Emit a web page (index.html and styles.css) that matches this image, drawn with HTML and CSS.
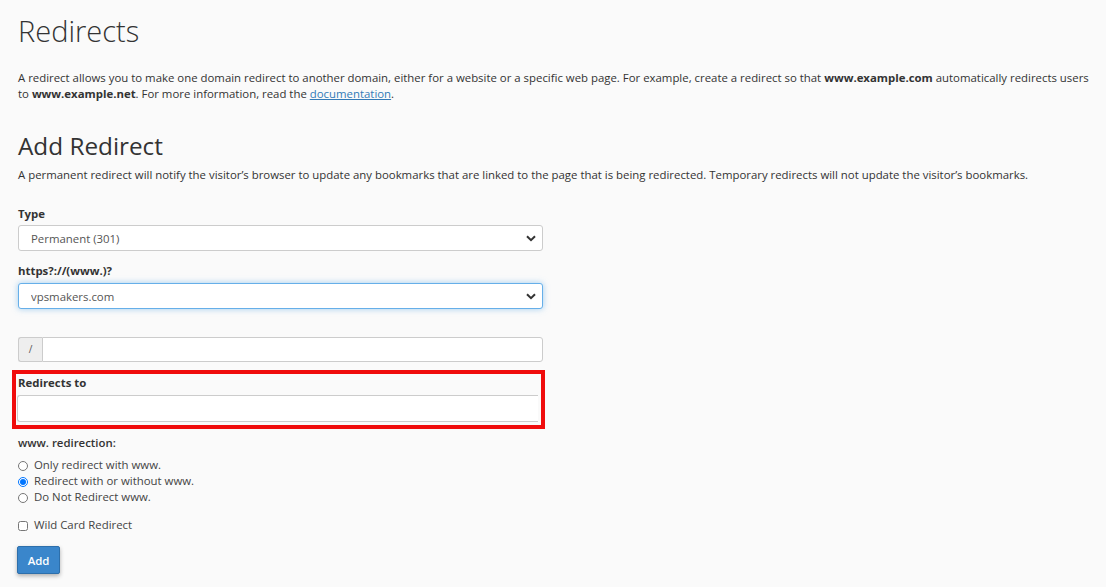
FILE: index.html
```html
<!DOCTYPE html>
<html lang="en">
<head>
    <meta charset="UTF-8">
    <meta name="viewport" content="width=device-width, initial-scale=1.0">
    <title>Redirects</title>
    <link rel="stylesheet" href="styles.css">
</head>
<body>

    <div class="container">
        <h1>Redirects</h1>
        <p class="intro">A redirect allows you to make one domain redirect to another domain, either for a website or a specific web page. For example, create a redirect so that <strong>www.example.com</strong> automatically redirects users to <strong>www.example.net</strong>. For more information, read the <a href="#">documentation</a>.</p>

        <h2>Add Redirect</h2>
        <p class="sub">A permanent redirect will notify the visitor’s browser to update any bookmarks that are linked to the page that is being redirected. Temporary redirects will not update the visitor’s bookmarks.</p>

        <div class="form-group first">
            <label for="type">Type</label>
            <div class="select-wrap">
                <select id="type">
                    <option>Permanent (301)</option>
                    <option>Temporary (302)</option>
                </select>
                <svg class="chevron" width="10" height="7" viewBox="0 0 10 7"><path d="M1 1.2 L5 5.2 L9 1.2" fill="none" stroke="#333" stroke-width="2"/></svg>
            </div>
        </div>

        <div class="form-group">
            <label for="domain">https?://(www.)?</label>
            <div class="select-wrap">
                <select id="domain" class="focused">
                    <option>vpsmakers.com</option>
                </select>
                <svg class="chevron" width="10" height="7" viewBox="0 0 10 7"><path d="M1 1.2 L5 5.2 L9 1.2" fill="none" stroke="#333" stroke-width="2"/></svg>
            </div>
        </div>

        <div class="input-group">
            <span class="addon">/</span>
            <input type="text" id="path">
        </div>

        <div class="highlight">
            <label for="target">Redirects to</label>
            <input type="text" id="target">
        </div>

        <div class="radio-block">
            <div class="radio-title">www. redirection:</div>
            <label class="opt"><input type="radio" name="www"> Only redirect with www.</label>
            <label class="opt"><input type="radio" name="www" checked> Redirect with or without www.</label>
            <label class="opt"><input type="radio" name="www"> Do Not Redirect www.</label>
        </div>

        <label class="opt wild"><input type="checkbox"> Wild Card Redirect</label>

        <button>Add</button>
    </div>

</body>
</html>
```

FILE: styles.css
```css
body {
    margin: 0;
    background-color: #fafafa;
    font-family: 'Open Sans', 'Noto Sans', sans-serif;
    font-size: 11.4px;
    line-height: 15px;
    color: #333;
}
.container {
    padding: 0 8px 20px 18px;
}
h1 {
    font-size: 29px;
    font-weight: 300;
    line-height: 36px;
    margin: 13px 0 0;
    color: #333;
}
.intro {
    margin: 21px 0 0;
    line-height: 15.6px;
}
.intro a {
    color: #337ab7;
    text-decoration: underline;
}
h2 {
    font-size: 24.3px;
    font-weight: 400;
    line-height: 30px;
    margin: 30px 0 0;
}
.sub {
    margin: 6px 0 0;
}
.form-group {
    margin-top: 12px;
    width: 525px;
}
.form-group.first {
    margin-top: 24px;
}
label {
    display: block;
    font-weight: 700;
    margin-bottom: 4px;
}
.form-group + .form-group label {
    margin-bottom: 5px;
}
.select-wrap {
    position: relative;
}
select {
    -webkit-appearance: none;
    appearance: none;
    width: 100%;
    height: 26px;
    padding: 0 12px;
    border: 1px solid #ccc;
    border-radius: 3px;
    background: #fff;
    font-family: inherit;
    font-size: 11.4px;
    color: #555;
    display: block;
}
select.focused {
    border-color: #66afe9;
    box-shadow: 0 0 6px rgba(102, 175, 233, 0.6);
    outline: none;
}
.chevron {
    position: absolute;
    right: 7px;
    top: 10px;
    pointer-events: none;
}
.input-group {
    display: flex;
    width: 525px;
    height: 25px;
    margin-top: 28px;
}
.addon {
    width: 24px;
    background: #eee;
    border: 1px solid #ccc;
    border-right: none;
    border-radius: 3px 0 0 3px;
    color: #555;
    display: flex;
    align-items: center;
    justify-content: center;
    font-size: 10px;
    box-sizing: border-box;
}
.input-group input {
    flex: 1;
    border: 1px solid #ccc;
    border-radius: 0 3px 3px 0;
    background: #fff;
    box-sizing: border-box;
    height: 25px;
}
.highlight {
    margin: 8px 0 0 -6px;
    width: 524px;
    border: 4px solid #f00c0c;
    padding: 1px 0 0 1px;
    overflow: hidden;
    height: 50px;
}
.highlight label {
    margin: 0 0 5px 1px;
}
.highlight input {
    display: block;
    width: 521px;
    height: 27px;
    box-sizing: border-box;
    border: 1px solid #ccc;
    border-right: none;
    border-radius: 3px 0 0 3px;
    background: #fff;
}
.radio-block {
    margin-top: 6px;
}
.radio-title {
    font-weight: 600;
    margin-bottom: 7px;
}
.opt {
    display: flex;
    align-items: center;
    font-weight: 400;
    line-height: 16px;
    margin: 0;
    color: #444;
}
.opt input {
    width: 10px;
    height: 10px;
    margin: 1px 6px 0 0;
}
.wild {
    margin-top: 12px;
}
button {
    margin-top: 13px;
    width: 43px;
    height: 28px;
    background-color: #3a86cb;
    border: 1px solid #2d6fab;
    border-radius: 2px;
    color: #fff;
    font-family: inherit;
    font-size: 11.4px;
    font-weight: 600;
    box-shadow: 0 2px 4px rgba(0, 0, 0, 0.3);
    cursor: pointer;
    margin-left: -1px;
}
```
